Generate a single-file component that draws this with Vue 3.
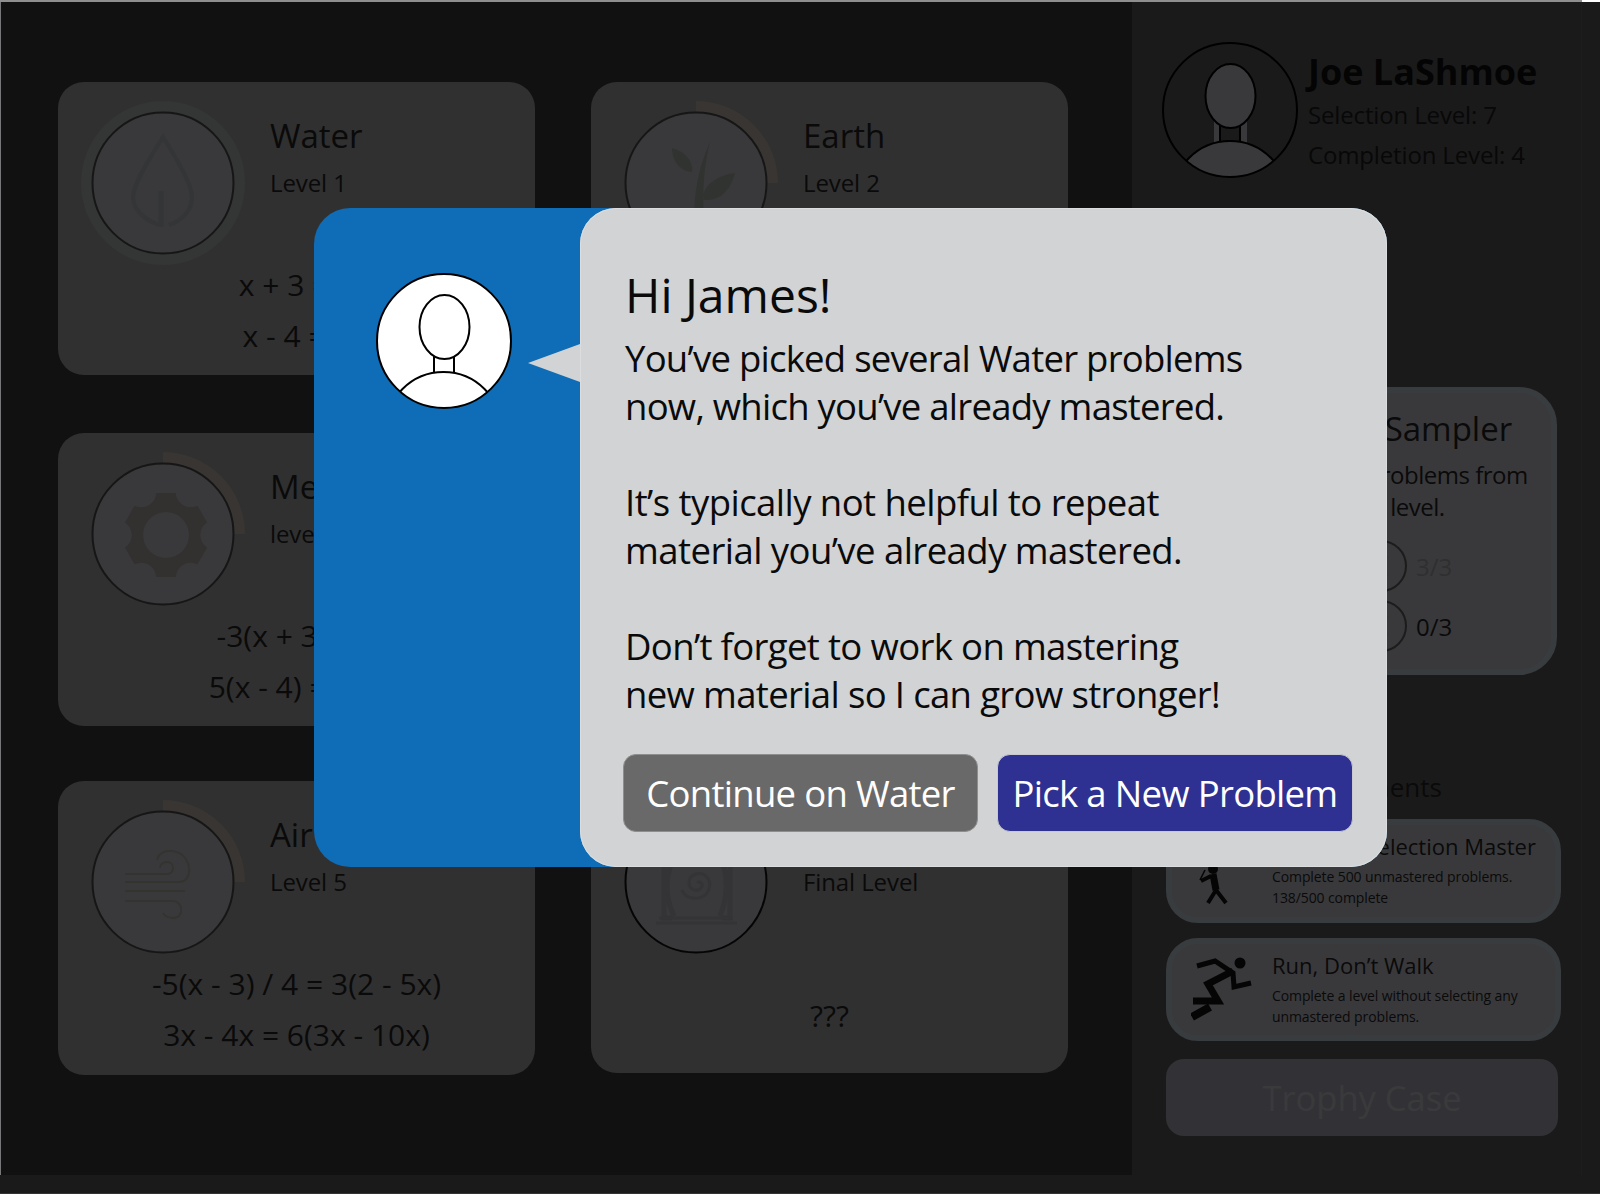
<template>
  <div class="screen">
    <div class="topbar"><div class="topbar-fill"></div></div>
    <div class="main">
      <section class="board">
        <article v-for="card in levels" :key="card.id" class="level-card" :class="card.id">
          <div class="level-head">
            <svg class="badge" width="164" height="164" viewBox="0 0 164 164">
              <circle v-if="card.ring" cx="82" cy="82" r="76.5" fill="none" stroke="#343635" stroke-width="11" />
              <path v-if="card.arc" d="M82 5.5 A76.5 76.5 0 0 1 158.5 82" fill="none" stroke="#393532" stroke-width="11" />
              <circle cx="82" cy="82" r="70.5" fill="#39393b" :stroke="card.id === 'final' ? '#050505' : '#161616'" stroke-width="2" />

              <g v-if="card.id === 'water'" fill="none" stroke="#333537" stroke-width="4">
                <path d="M78 124 C62 118 52 108 52 96 C52 84 68 58 82 36 C96 58 111 84 111 96 C111 110 100 120 88 124" />
                <path d="M80 126 V90" stroke-width="5" />
              </g>
              <path v-if="card.id === 'earth'" fill="#313331" d="M96 41 C88 60 80 82 80 120 L90 120 C88 88 90 66 96 41 Z M58 47 C70 50 80 60 78 71 C66 70 58 60 58 47 Z M121 72 C116 92 104 100 89 99 C88 84 104 74 121 72 Z" />
              <g v-if="card.id === 'mech'">
                <path :d="gearPath" fill="#323130" />
                <circle cx="85" cy="83" r="23" fill="#39393b" />
              </g>
              <g v-if="card.id === 'air'" fill="none" stroke="#35332f" stroke-width="1.8">
                <path d="M44 74 H86 C94 74 94 62 86 62 C80 62 79 66 79 68" />
                <path d="M44 82 H98 C112 82 112 58 96 52 C86 49 78 52 76 60" />
                <path d="M44 91 H104" />
                <path d="M44 101 H92 C102 101 104 118 92 118 C88 118 84 116 82 113" />
              </g>
              <g v-if="card.id === 'final'" fill="none" stroke="#343336">
                <path d="M83 83 C86 80 90 84 87 88 C83 93 75 89 75 83 C75 74 86 71 92 76 C99 83 96 96 84 98 C76 99 70 96 68 90" stroke-width="3" />
                <path d="M50 62 V118 H58 M116 62 V118 H108 M60 116 C50 96 52 76 58 62 M106 116 C114 96 114 76 108 62" stroke-width="5" />
                <path d="M45 118 H119" stroke-width="3" />
                <path d="M42 123 H123" stroke-width="3" />
              </g>
            </svg>
            <div class="level-title">
              <h2>{{ card.name }}</h2>
              <p>{{ card.level }}</p>
            </div>
          </div>
          <div class="problems">
            <p v-for="eq in card.problems" :key="eq">{{ eq }}</p>
          </div>
        </article>
      </section>

      <aside class="side">
        <div class="profile">
          <svg class="profile-pic" width="140" height="140" viewBox="0 0 140 140">
            <defs>
              <clipPath id="profileClip"><circle cx="70" cy="70" r="67" /></clipPath>
            </defs>
            <rect x="54" y="80" width="33" height="30" fill="#39393b" />
            <rect x="60" y="80" width="20" height="30" fill="#1a1a1a" stroke="#000" stroke-width="2" />
            <ellipse cx="70.5" cy="56" rx="25" ry="32" fill="#39393b" stroke="#000" stroke-width="2" />
            <circle cx="70" cy="159" r="58" fill="#39393b" stroke="#000" stroke-width="2" clip-path="url(#profileClip)" />
            <circle cx="70" cy="70" r="67" fill="none" stroke="#000" stroke-width="2" />
          </svg>
          <div class="profile-text">
            <h1>Joe LaShmoe</h1>
            <p>Selection Level: 7</p>
            <p>Completion Level: 4</p>
          </div>
        </div>

        <div class="sampler">
          <h3>Level Sampler</h3>
          <p class="sampler-copy">Try some problems from<br />within each level.</p>
          <div v-for="row in samplerRows" :key="row.label" class="sampler-row" :class="{ done: row.done }">
            <svg width="52" height="52" viewBox="0 0 52 52">
              <circle cx="26" cy="26" r="25" fill="#39393b" stroke="#1c1c1c" stroke-width="2" />
              <path d="M20 16 H34 L30 26 L34 36 H20 L24 26 Z" fill="#38382f" />
            </svg>
            <span>{{ row.label }}</span>
          </div>
        </div>

        <h3 class="ach-heading">Achievements</h3>

        <div class="achievement first">
          <svg class="ach-icon" width="64" height="80" viewBox="0 0 64 80">
            <circle cx="22" cy="39" r="5" fill="#050505" />
            <path d="M22 44 L25 60" fill="none" stroke="#050505" stroke-width="7" />
            <path d="M25 60 L17 73 M25 60 L35 73 M20 46 L10 51" fill="none" stroke="#050505" stroke-width="4" />
            <path d="M14 40 L9 50" fill="none" stroke="#050505" stroke-width="1.5" />
          </svg>
          <div>
            <h4>Ultimate Selection Master</h4>
            <p>Complete 500 unmastered problems.<br />138/500 complete</p>
          </div>
        </div>

        <div class="achievement">
          <svg class="ach-icon" width="64" height="80" viewBox="0 0 64 80">
            <circle cx="49" cy="14" r="5.5" fill="#050505" />
            <path d="M6 17 L24 12 L42 24 L43 38 L60 34" fill="none" stroke="#050505" stroke-width="5" />
            <path d="M42 22 L17 35 L27 52 L2 52" fill="none" stroke="#050505" stroke-width="7" />
            <path d="M1 68 L19 58" fill="none" stroke="#050505" stroke-width="8" />
          </svg>
          <div>
            <h4>Run, Don’t Walk</h4>
            <p>Complete a level without selecting any<br />unmastered problems.</p>
          </div>
        </div>

        <button type="button" class="trophy">Trophy Case</button>
      </aside>
    </div>

    <div class="modal">
      <div class="modal-left">
        <svg width="140" height="140" viewBox="0 0 140 140">
          <defs>
            <clipPath id="mascotClip"><circle cx="70" cy="70" r="67" /></clipPath>
          </defs>
          <circle cx="70" cy="70" r="67" fill="#fff" />
          <rect x="60" y="84" width="20" height="26" fill="#fff" stroke="#000" stroke-width="2" />
          <ellipse cx="70.5" cy="56" rx="25" ry="32" fill="#fff" stroke="#000" stroke-width="2" />
          <circle cx="69.5" cy="159" r="58" fill="#fff" stroke="#000" stroke-width="2" clip-path="url(#mascotClip)" />
          <circle cx="70" cy="70" r="67" fill="none" stroke="#000" stroke-width="2" />
        </svg>
      </div>
      <div class="bubble">
        <span class="tail"></span>
        <h2>Hi James!</h2>
        <p>You’ve picked several Water problems<br />now, which you’ve already mastered.</p>
        <p class="second">It’s typically not helpful to repeat<br />material you’ve already mastered.</p>
        <p class="third">Don’t forget to work on mastering<br />new material so I can grow stronger!</p>
        <div class="actions">
          <button type="button" class="btn btn-grey">Continue on Water</button>
          <button type="button" class="btn btn-blue">Pick a New Problem</button>
        </div>
      </div>
    </div>
  </div>
</template>

<script setup>
const levels = [
  { id: 'water', name: 'Water', level: 'Level 1', ring: true, problems: ['x + 3 = 5', 'x - 4 = 1'] },
  { id: 'earth', name: 'Earth', level: 'Level 2', arc: true, problems: [] },
  { id: 'mech', name: 'Metal', level: 'level 3', arc: true, problems: ['-3(x + 3) = 9', '5(x - 4) = 10x'] },
  { id: 'hidden', name: '', level: '', problems: [] },
  { id: 'air', name: 'Air', level: 'Level 5', arc: true, problems: ['-5(x - 3) / 4 = 3(2 - 5x)', '3x - 4x = 6(3x - 10x)'] },
  { id: 'final', name: '', level: 'Final Level', problems: ['???'] }
]

const samplerRows = [
  { label: '3/3', done: true },
  { label: '0/3', done: false }
]

// six flat teeth joined by scooped arcs
const gearPath = (() => {
  const cx = 85
  const cy = 83
  const r = 43
  const pt = (deg) => {
    const a = (deg * Math.PI) / 180
    return `${(cx + r * Math.cos(a)).toFixed(1)} ${(cy + r * Math.sin(a)).toFixed(1)}`
  }
  let d = ''
  for (let i = 0; i < 6; i++) {
    const a = -90 + i * 60
    d += `${i === 0 ? 'M' : 'A15 15 0 0 0'} ${pt(a - 13)} L ${pt(a + 13)} `
  }
  return d + `A15 15 0 0 0 ${pt(-103)} Z`
})()
</script>

<style>
html, body {
  margin: 0;
  background: #fff;
}
</style>

<style scoped>
* { box-sizing: border-box; }
h1, h2, h3, h4, p { margin: 0; font-weight: 400; }

.screen {
  position: relative;
  width: 1600px;
  height: 1194px;
  overflow: hidden;
  background: #1a1a1a;
  border-bottom: 1px solid #333;
  font-family: "Open Sans", "Noto Sans", sans-serif;
  color: #0a0a0a;
}
.topbar {
  height: 2px;
  background: #fff;
}
.topbar-fill {
  width: 1582px;
  height: 2px;
  background: #8f8f90;
}
.main {
  display: flex;
  height: 1173px;
}

.board {
  width: 1132px;
  padding: 80px 0 0 57px;
  background: #111;
  border-left: 1px solid #77777a;
  display: grid;
  grid-template-columns: 477px 477px;
  grid-auto-rows: 293px;
  column-gap: 56px;
  row-gap: 58px;
}
.level-card {
  background: #303030;
  border-radius: 26px;
  padding: 19px 0 0 23px;
}
.level-card.air,
.level-card.final {
  margin-top: -3px;
  height: 294px;
}
.level-card.final { height: 292px; }
.level-head {
  display: flex;
  height: 164px;
}
.badge { flex: none; }
.level-title {
  padding: 13px 0 0 25px;
}
.level-title h2 {
  font-size: 33px;
  line-height: 44px;
  min-height: 44px;
}
.level-title p {
  font-size: 24px;
  line-height: 32px;
  margin-top: 9px;
  letter-spacing: -0.1px;
}
.problems {
  margin: -6px 0 0 -23px;
  text-align: center;
}
.problems p {
  font-size: 30px;
  line-height: 51px;
}
.final .problems {
  padding-top: 32px;
}

.side {
  width: 450px;
  padding: 38px 0 0 34px;
  border-right: 1px solid #1d1d1d;
}
.profile {
  display: flex;
  height: 347px;
  margin-left: -6px;
}
.profile-pic { flex: none; }
.profile-text {
  margin-left: 8px;
}
.profile-text h1 {
  font-size: 36px;
  font-weight: 700;
  line-height: 47px;
  color: #040404;
  margin-top: 8px;
}
.profile-text p {
  font-size: 24px;
  line-height: 40px;
  letter-spacing: -0.15px;
  color: #080808;
}
.sampler {
  width: 391px;
  height: 288px;
  background: #39393b;
  border: 6px solid #393c3e;
  border-radius: 38px;
  padding: 14px 0 0 90px;
}
.sampler h3 {
  font-size: 33px;
  line-height: 44px;
  margin-left: 35px;
}
.sampler-copy {
  font-size: 24px;
  line-height: 32px;
  letter-spacing: -0.5px;
  margin-top: 8px;
  white-space: nowrap;
}
.sampler-row {
  display: flex;
  align-items: center;
  gap: 9px;
  height: 60px;
  font-size: 24px;
  margin-left: 93px;
}
.sampler-copy + .sampler-row { margin-top: 13px; }
.sampler-row.done span { color: #2f2f30; }

.ach-heading {
  font-size: 26px;
  line-height: 36px;
  margin: 94px 0 14px 106px;
}
.achievement {
  display: flex;
  width: 395px;
  height: 103px;
  background: #39393b;
  border: 6px solid #393c3e;
  border-radius: 32px;
  padding: 5px 0 0 19px;
  margin-bottom: 15px;
}
.achievement.first { height: 104px; }
.ach-icon {
  flex: none;
  margin-right: 17px;
}
.achievement h4 {
  font-size: 22px;
  line-height: 32px;
  white-space: nowrap;
}
.achievement p {
  font-size: 14px;
  line-height: 21px;
  letter-spacing: -0.1px;
  margin-top: 4px;
  white-space: nowrap;
}
.trophy {
  display: block;
  width: 392px;
  height: 77px;
  margin-top: 18px;
  padding: 0;
  border: none;
  border-radius: 18px;
  background: #323236;
  color: #3a3a3c;
  font: 400 34.5px "Open Sans", "Noto Sans", sans-serif;
}

.modal {
  position: absolute;
  left: 314px;
  top: 208px;
  width: 1073px;
  height: 659px;
  background: #0f6cb6;
  border-radius: 36px;
  display: flex;
}
.modal-left {
  width: 266px;
  padding: 63px 0 0 60px;
}
.bubble {
  position: relative;
  flex: 1;
  background: #d1d3d4;
  border-radius: 36px;
  box-shadow: inset 0 0 0 1px #dcddde;
  padding: 56px 0 0 45px;
  color: #0a0a0a;
}
.tail {
  position: absolute;
  left: -52px;
  top: 136px;
  width: 52px;
  height: 38px;
  background: #d1d3d4;
  clip-path: polygon(0 50%, 100% 0, 100% 100%);
}
.bubble h2 {
  font-size: 48px;
  line-height: 62px;
}
.bubble p {
  font-size: 36.5px;
  line-height: 48px;
  letter-spacing: -0.75px;
  margin-bottom: 48px;
  white-space: nowrap;
}
.bubble p.second { letter-spacing: -0.55px; }
.bubble p.third { letter-spacing: -0.65px; }
.bubble h2 + p { margin-top: 8px; }
.actions {
  display: flex;
  gap: 19px;
  margin: -12px 0 0 -2px;
}
.btn {
  width: 356px;
  height: 78px;
  border-radius: 13px;
  border: 1px solid #8e8e8e;
  color: #fff;
  font: 400 36.5px "Open Sans", "Noto Sans", sans-serif;
  letter-spacing: -0.7px;
  padding: 0;
  white-space: nowrap;
}
.btn-grey { background: #696969; width: 355px; }
.btn-blue { background: #2e3192; border-color: #c8cad0; }
</style>
